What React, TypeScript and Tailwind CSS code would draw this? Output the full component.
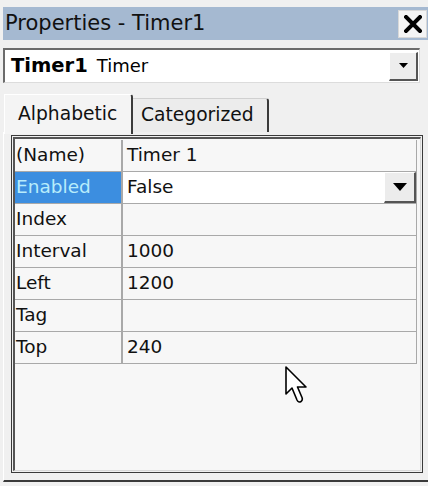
import React from 'react';

const rows: { name: string; value: string }[] = [
  { name: '(Name)', value: 'Timer 1' },
  { name: 'Enabled', value: 'False' },
  { name: 'Index', value: '' },
  { name: 'Interval', value: '1000' },
  { name: 'Left', value: '1200' },
  { name: 'Tag', value: '' },
  { name: 'Top', value: '240' },
];

const font = { fontFamily: '"DejaVu Sans", Tahoma, sans-serif' };

function DownTriangle({ w, h }: { w: number; h: number }) {
  return (
    <svg width={w} height={h} viewBox={`0 0 ${w} ${h}`}>
      <polygon points={`0,0 ${w},0 ${w / 2},${h}`} fill="#000" />
    </svg>
  );
}

export default function App() {
  return (
    <div
      className="relative w-[428px] h-[486px] bg-[#f0f0f0] pt-[7px] overflow-hidden text-black"
      style={font}
    >
      {/* title bar */}
      <div className="ml-[3px] h-[33px] bg-[#a5b9d1] flex items-center justify-between">
        <span className="pl-[2px] text-[21px] leading-none text-[#111]">Properties - Timer1</span>
        <button className="w-[29px] h-[28px] mr-[1px] bg-[#f4f4f4] border border-[#d8d8d8] flex items-center justify-center">
          <svg width="18" height="18" viewBox="0 0 18 18">
            <path d="M2 2 L16 16 M16 2 L2 16" stroke="#000" strokeWidth="4" strokeLinecap="square" />
          </svg>
        </button>
      </div>

      {/* object combo */}
      <div className="mt-[8px] ml-[3px] mr-[8px] h-[35px] bg-white border-t-2 border-l-2 border-[#6b6b6b] border-r border-b border-r-[#dcdcdc] border-b-[#dcdcdc] flex items-center">
        <div className="flex-1 flex items-baseline pl-[6px]">
          <span className="text-[19.5px] font-bold leading-none">Timer1</span>
          <span className="ml-[9px] text-[18px] leading-none">Timer</span>
        </div>
        <div className="w-[29px] h-[29px] mr-[1px] bg-[#ededed] border-t border-l border-white border-r-2 border-b-2 border-r-[#555] border-b-[#555] flex items-center justify-center">
          <DownTriangle w={9} h={5} />
        </div>
      </div>

      {/* tabs */}
      <div className="mt-[9px] ml-[4px] flex items-end h-[40px]">
        <div className="w-[129px] h-[40px] bg-[#f4f4f4] border-t border-l border-white border-r-2 border-r-[#3a3a3a] rounded-tr-[3px] flex items-center pl-[13px] relative z-10 -mb-[2px]">
          <span className="text-[18.7px] leading-none text-[#111]">Alphabetic</span>
        </div>
        <div className="w-[136px] h-[34px] bg-[#ececec] border-t border-[#d0d0d0] border-r-2 border-r-[#3a3a3a] rounded-tr-[3px] flex items-center pl-[8px]">
          <span className="text-[18.7px] leading-none text-[#111]">Categorized</span>
        </div>
      </div>

      {/* tab page */}
      <div className="ml-[3px] h-[350px] border-l border-white border-b-2 border-b-[#3a3a3a] bg-[#f0f0f0] pt-[3px] pl-[7px] pr-[5px]">
        <div className="h-[338px] border border-[#3a3a3a] p-[1px]">
          <div className="h-full border-l-2 border-t-2 border-[#555] border-r border-b border-r-[#d8d8d8] border-b-[#d8d8d8] bg-[#f7f7f7] pt-[1px] pr-[3px]">
            {rows.map((r) => {
              const sel = r.name === 'Enabled';
              return (
                <div key={r.name} className="flex h-[32px] border-b border-[#a9a9a9] border-r border-r-[#a9a9a9]">
                  <div
                    className={`w-[108px] border-r-2 border-[#a9a9a9] flex items-center pl-[1px] text-[18.5px] leading-none ${
                      sel ? 'bg-[#3c8ee0] text-[#b8ecfb] border-r-0' : 'text-[#111]'
                    }`}
                  >
                    {r.name}
                  </div>
                  <div className={`flex-1 flex items-center pl-[4px] text-[18.5px] leading-none text-[#111] ${sel ? 'bg-white' : ''}`}>
                    <span className="flex-1">{r.value}</span>
                    {sel && (
                      <div className="w-[32px] h-[31px] bg-[#ececec] border-t border-l border-white border-r-2 border-b-2 border-r-[#555] border-b-[#555] flex items-center justify-center">
                        <DownTriangle w={14} h={8} />
                      </div>
                    )}
                  </div>
                </div>
              );
            })}
          </div>
        </div>
      </div>

      {/* mouse cursor */}
      <svg className="absolute left-[285px] top-[366px]" width="26" height="40" viewBox="0 0 26 40">
        <path
          d="M1 1 L1 28 L7 22 L12 34 Q13.5 37 16 35.5 Q18 34 17 31.5 L12.5 21 L21 21 Z"
          fill="#fff"
          stroke="#000"
          strokeWidth="1.6"
          strokeLinejoin="round"
        />
      </svg>
    </div>
  );
}
